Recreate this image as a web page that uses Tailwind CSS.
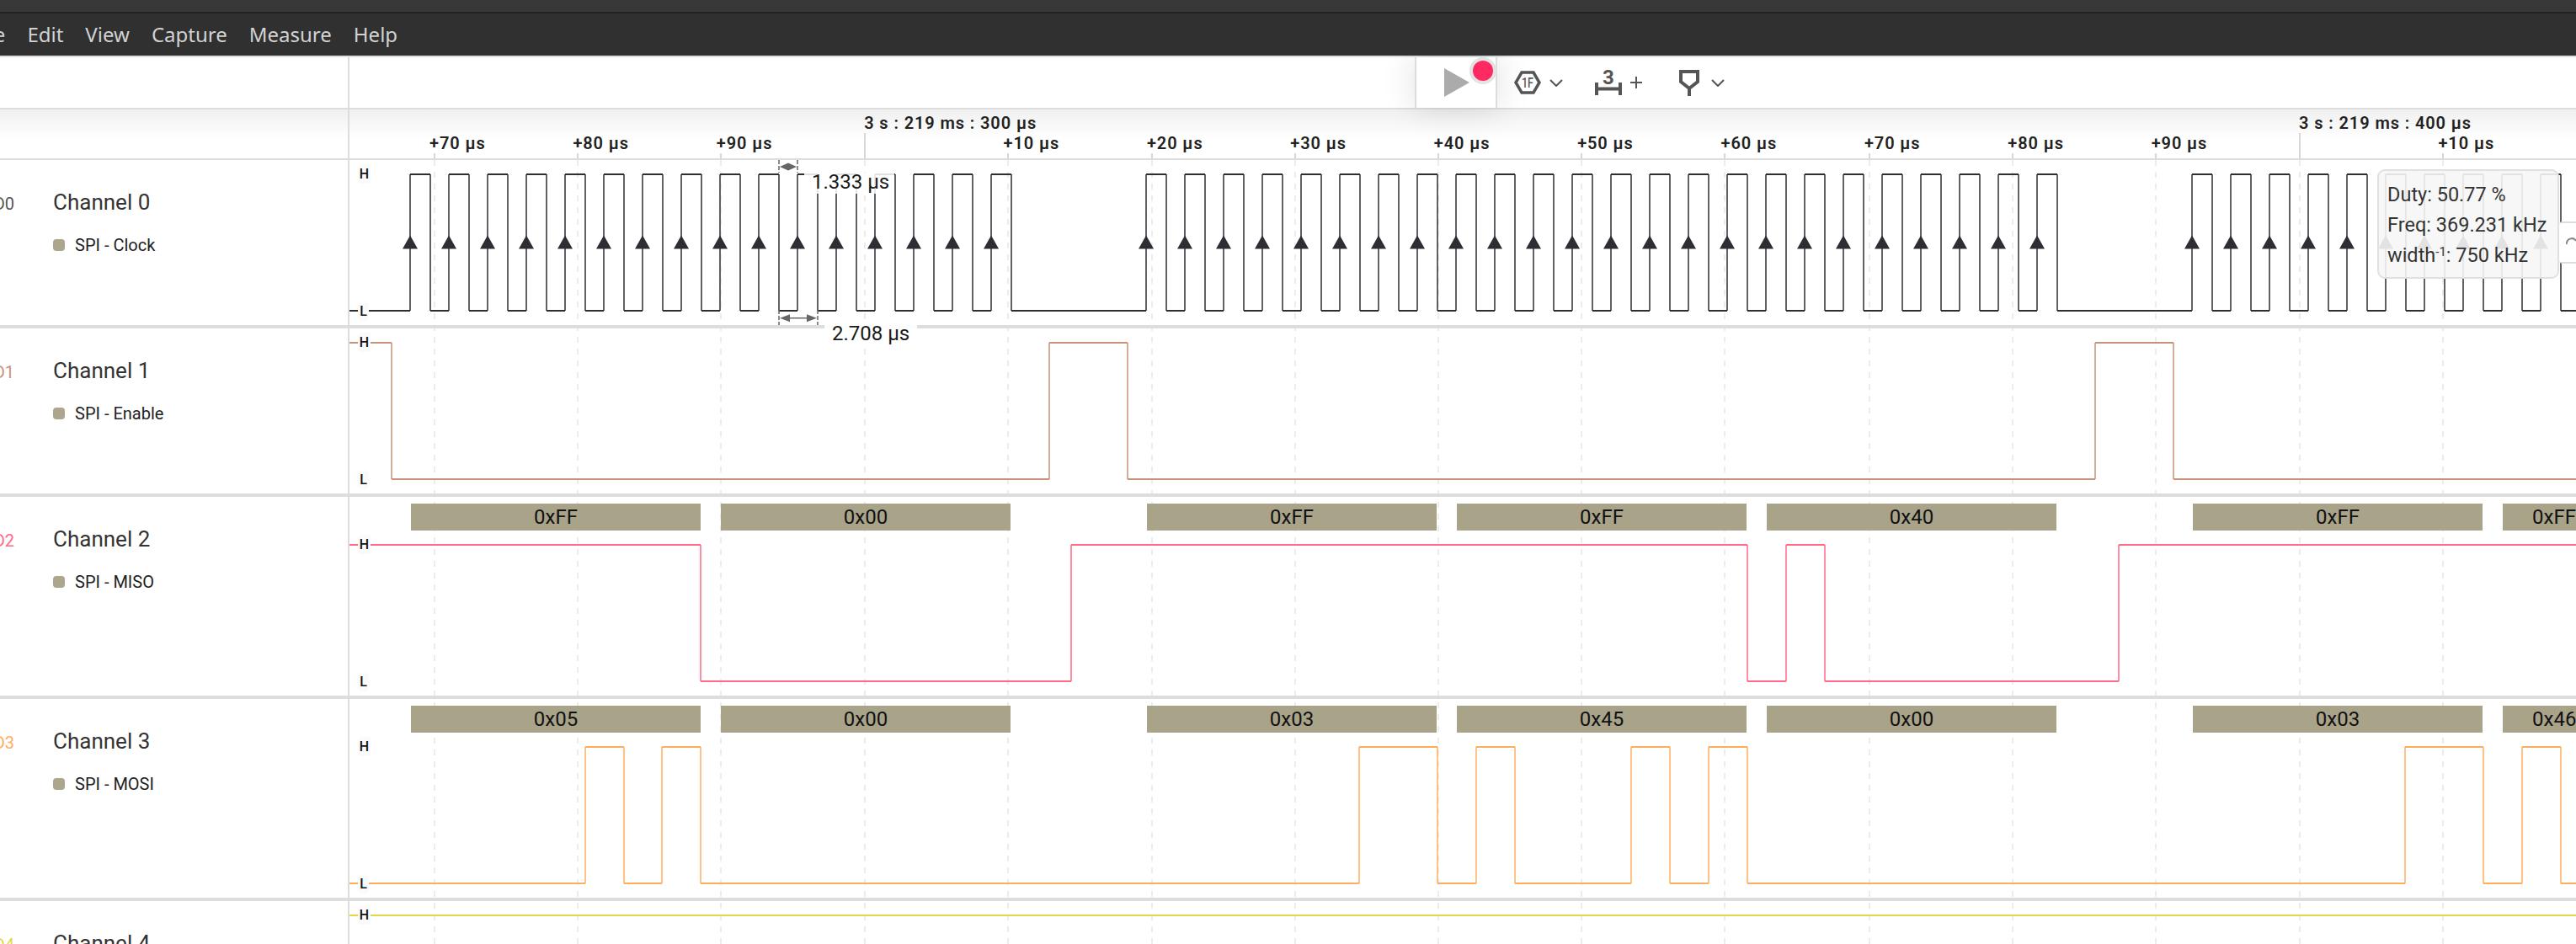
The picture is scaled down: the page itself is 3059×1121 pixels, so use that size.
<!DOCTYPE html>
<html lang="en">
<head>
<meta charset="utf-8">
<title>Logic analyzer</title>
<script src="https://cdn.jsdelivr.net/npm/@tailwindcss/browser@4"></script>
</head>
<body class="bg-white">
<div class="relative flex h-[1121px] w-[3059px] flex-col overflow-hidden bg-white font-['Roboto',sans-serif] text-[#222]">

  <!-- title strip and menu -->
  <div class="relative z-20 h-[14px] bg-[#383838]"></div>
  <div class="relative z-20 h-[2px] bg-[#222]"></div>
  <div class="relative z-20 flex h-[50px] items-center gap-[26px] bg-[#303030] font-['Noto_Sans',sans-serif] text-[24px] text-[#d2d2d2]">
    <span class="-ml-[32px]">File</span><span>Edit</span><span>View</span><span>Capture</span><span>Measure</span><span>Help</span>
  </div>

  <!-- toolbar -->
  <div class="flex h-[64px] shrink-0 border-y-2 border-[#ddd]">
    <div class="h-full w-[415px] shrink-0 border-r-2 border-[#ddd]"></div>
    <div class="relative z-10 ml-[1265px] h-full w-[98px] shrink-0 border-x-2 border-[#ddd] bg-white shadow-[0_0_40px_rgba(0,0,0,0.13)]">
      <svg class="absolute -left-[2px] top-0" width="98" height="60" viewBox="0 0 98 60">
        <path d="M35 13V47L65 30Z" fill="#ababab"/>
        <circle cx="81" cy="16" r="16" fill="#e3e3e3"/>
        <circle cx="81" cy="16" r="12" fill="#ff2a62"/>
      </svg>
    </div>
    <div class="relative z-10 flex items-center">
      <svg class="ml-[20px]" width="32" height="28" viewBox="0 0 32 28">
        <path d="M9 2H23L30 14L23 26H9L2 14Z" fill="none" stroke="#555" stroke-width="3.5"/>
        <text x="16" y="20" font-size="17" font-family="Roboto" font-weight="500" fill="#555" text-anchor="middle" textLength="14" lengthAdjust="spacingAndGlyphs">1F</text>
      </svg>
      <svg class="ml-[10px]" width="16" height="9" viewBox="0 0 16 9"><path d="M1 1L8 8L15 1" fill="none" stroke="#555" stroke-width="2"/></svg>
      <svg class="ml-[38px]" width="32" height="32" viewBox="0 0 32 32">
        <text x="16" y="18" font-size="24" font-family="Roboto" font-weight="700" fill="#555" text-anchor="middle">3</text>
        <path d="M2 16V31M30 16V31" stroke="#555" stroke-width="4" fill="none"/>
        <path d="M2 23.5H30" stroke="#555" stroke-width="4" fill="none"/>
      </svg>
      <svg class="ml-[10px]" width="14" height="14" viewBox="0 0 14 14"><path d="M7 0V14M0 7H14" stroke="#555" stroke-width="2" fill="none"/></svg>
      <svg class="ml-[44px]" width="24" height="32" viewBox="0 0 24 32">
        <path d="M2 3H22V15L12 23L2 15Z" fill="none" stroke="#555" stroke-width="4"/>
        <path d="M12 22V32" stroke="#555" stroke-width="4" fill="none"/>
      </svg>
      <svg class="ml-[14px]" width="16" height="9" viewBox="0 0 16 9"><path d="M1 1L8 8L15 1" fill="none" stroke="#555" stroke-width="2"/></svg>
    </div>
  </div>

  <!-- ruler -->
  <div class="relative flex h-[60px] shrink-0 border-b-2 border-[#ddd] bg-linear-to-b from-[#f0f0f0] to-white to-60%">
    <div class="h-full w-[415px] shrink-0 border-r-2 border-[#ddd]"></div>
    <div class="ml-[95px] flex items-start whitespace-nowrap text-[20px] leading-[24px] font-semibold tracking-[0.9px] text-[#222]">
      <div class="mt-[28px] w-[170.4px] shrink-0">+70 µs</div>
      <div class="mt-[28px] w-[170.4px] shrink-0">+80 µs</div>
      <div class="mt-[28px] w-[170.4px] shrink-0">+90 µs</div>
      <div class="mt-[4px] w-[170.4px] shrink-0 pl-[5px]">3 s : 219 ms : 300 µs</div>
      <div class="mt-[28px] w-[170.4px] shrink-0">+10 µs</div>
      <div class="mt-[28px] w-[170.4px] shrink-0">+20 µs</div>
      <div class="mt-[28px] w-[170.4px] shrink-0">+30 µs</div>
      <div class="mt-[28px] w-[170.4px] shrink-0">+40 µs</div>
      <div class="mt-[28px] w-[170.4px] shrink-0">+50 µs</div>
      <div class="mt-[28px] w-[170.4px] shrink-0">+60 µs</div>
      <div class="mt-[28px] w-[170.4px] shrink-0">+70 µs</div>
      <div class="mt-[28px] w-[170.4px] shrink-0">+80 µs</div>
      <div class="mt-[28px] w-[170.4px] shrink-0">+90 µs</div>
      <div class="mt-[4px] w-[170.4px] shrink-0 pl-[5px]">3 s : 219 ms : 400 µs</div>
      <div class="mt-[28px] w-[170.4px] shrink-0">+10 µs</div>
    </div>
    <svg class="absolute left-0 top-0" width="3059" height="60" viewBox="0 0 3059 60" fill="none" stroke="#d8d8d8" stroke-width="2">
      <path d="M516 52V58M686 52V58M856 52V58M1197 52V58M1368 52V58M1538 52V58M1708 52V58M1878 52V58M2048 52V58M2220 52V58M2390 52V58M2560 52V58M2901 52V58"/>
      <path d="M1027 28V58M2731 28V58"/>
    </svg>
  </div>

  <!-- channels -->
  <div class="relative flex min-h-0 flex-1 flex-col">
    <svg class="absolute left-0 top-0" width="3059" height="931" viewBox="0 0 3059 931" fill="none" stroke="#ececec" stroke-width="2" stroke-dasharray="7 7">
      <path d="M516 0V931M686 0V931M856 0V931M1027 0V931M1197 0V931M1368 0V931M1538 0V931M1708 0V931M1878 0V931M2048 0V931M2220 0V931M2390 0V931M2560 0V931M2731 0V931M2901 0V931"/>
    </svg>

    <!-- row 0 -->
    <div class="relative z-10 flex h-[200px] shrink-0 border-b-4 border-[#ddd]">
      <div class="h-full w-[415px] shrink-0 border-r-2 border-[#ddd]">
        <div class="flex items-baseline pt-[34px]">
          <span class="flex w-[17px] justify-end whitespace-nowrap text-[20px] leading-[32px] text-[#555]">D0</span>
          <span class="ml-[46px] text-[26px] leading-[32px] text-[#333]">Channel 0</span>
        </div>
        <div class="ml-[63px] mt-[21px] flex items-center gap-[12px] text-[20px] leading-[24px] text-[#222]">
          <span class="h-[14px] w-[14px] rounded-[4px] bg-[#aca68d]"></span><span>SPI - Clock</span>
        </div>
      </div>
      <svg class="absolute left-0 top-0 overflow-visible" width="3059" height="196" viewBox="0 0 3059 196" fill="none">
        <defs>
          <g id="pulse">
            <path stroke="#2d2d33" stroke-width="1.5" d="M0 17V179M24 17V179"/>
            <path stroke="#2d2d33" stroke-width="2" d="M0 17H24M24 179H46"/>
            <path fill="#2d2d33" d="M0 89.5l9 16h-18z"/>
          </g>
          <g id="byte">
            <use href="#pulse" x="0"/>
            <use href="#pulse" x="46"/>
            <use href="#pulse" x="92"/>
            <use href="#pulse" x="138"/>
            <use href="#pulse" x="184"/>
            <use href="#pulse" x="230"/>
            <use href="#pulse" x="276"/>
            <use href="#pulse" x="322"/>
          </g>
        </defs>
        <path stroke="#2d2d33" stroke-width="2" d="M415 179H487M1201 179H1361M2443 179H2603"/>
        <use href="#byte" x="487"/>
        <use href="#byte" x="855"/>
        <use href="#byte" x="1361"/>
        <use href="#byte" x="1729"/>
        <use href="#byte" x="2097"/>
        <use href="#byte" x="2603"/>
        <use href="#byte" x="2971"/>
        <path stroke="#666" stroke-width="1.5" stroke-dasharray="5 2" d="M925 0V15M947 0V15M925 178V196M971 178V196"/>
        <path fill="#666" d="M926 8L936 3.5L946 8L936 12.5ZM926 187.7l12-4.5v9zM970 187.7l-12-4.5v9z"/>
        <path stroke="#666" stroke-width="1.5" d="M938 187.7H958"/>
      </svg>
      <div class="absolute left-[425px] top-[5px] flex h-[23px] w-[15px] items-center justify-center rounded-[4px] bg-[#fafafa] text-[16px] font-medium text-[#111]">H</div>
      <div class="absolute left-[425px] top-[169px] flex h-[22px] w-[13px] items-center justify-center rounded-[4px] bg-[#fafafa] text-[16px] font-medium text-[#111]">L</div>
      <div class="absolute left-[955px] top-[15px] h-[25px] w-[107px] whitespace-nowrap bg-white/85 pl-[9px] text-[24px] leading-[22px] text-[#1a1a1a]">1.333 µs</div>
      <div class="absolute left-[979px] top-[196px] h-[25px] w-[110px] whitespace-nowrap bg-white/90 pl-[9px] text-[24px] leading-[20px] text-[#1a1a1a]">2.708 µs</div>
      <div class="absolute left-[2823px] top-[11px] h-[130px] w-[216px] rounded-[9px] border-2 border-[#e0e0e0] bg-[#f6f6f6]/90 pl-[10px] pt-[10px] text-[23.5px] leading-[36px] text-[#333]">
        <div>Duty: 50.77 %</div>
        <div>Freq: 369.231 kHz</div>
        <div>width<sup class="text-[15px]">-1</sup>: 750 kHz</div>
      </div>
      <div class="absolute left-[3039px] top-[73px] flex h-[50px] w-[20px] items-center rounded-l-[4px] border-y-2 border-[#ddd] bg-white pl-[8px]">
        <svg width="12" height="12" viewBox="0 0 12 12"><path d="M1 8A6 6 0 0 1 12 4" fill="none" stroke="#888" stroke-width="2"/></svg>
      </div>
    </div>

    <!-- row 1 -->
    <div class="relative flex h-[200px] shrink-0 border-b-4 border-[#ddd]">
      <div class="h-full w-[415px] shrink-0 border-r-2 border-[#ddd]">
        <div class="flex items-baseline pt-[34px]">
          <span class="flex w-[17px] justify-end whitespace-nowrap text-[20px] leading-[32px] text-[#c8917a]">D1</span>
          <span class="ml-[46px] text-[26px] leading-[32px] text-[#333]">Channel 1</span>
        </div>
        <div class="ml-[63px] mt-[21px] flex items-center gap-[12px] text-[20px] leading-[24px] text-[#222]">
          <span class="h-[14px] w-[14px] rounded-[4px] bg-[#aca68d]"></span><span>SPI - Enable</span>
        </div>
      </div>
      <svg class="absolute left-0 top-0" width="3059" height="196" viewBox="0 0 3059 196" fill="none" stroke="#c8917a">
        <path stroke-width="1.5" d="M465 17V179M1246 17V179M1339 17V179M2488 17V179M2581 17V179"/>
        <path stroke-width="2" d="M415 17H465M465 179H1246M1246 17H1339M1339 179H2488M2488 17H2581M2581 179H3059"/>
      </svg>
      <div class="absolute left-[425px] top-[5px] flex h-[23px] w-[15px] items-center justify-center rounded-[4px] bg-[#fafafa] text-[16px] font-medium text-[#111]">H</div>
      <div class="absolute left-[425px] top-[169px] flex h-[22px] w-[13px] items-center justify-center rounded-[4px] bg-[#fafafa] text-[16px] font-medium text-[#111]">L</div>
    </div>

    <!-- row 2 -->
    <div class="relative flex h-[240px] shrink-0 border-b-4 border-[#ddd]">
      <div class="h-full w-[415px] shrink-0 border-r-2 border-[#ddd]">
        <div class="flex items-baseline pt-[34px]">
          <span class="flex w-[17px] justify-end whitespace-nowrap text-[20px] leading-[32px] text-[#ff6a85]">D2</span>
          <span class="ml-[46px] text-[26px] leading-[32px] text-[#333]">Channel 2</span>
        </div>
        <div class="ml-[63px] mt-[21px] flex items-center gap-[12px] text-[20px] leading-[24px] text-[#222]">
          <span class="h-[14px] w-[14px] rounded-[4px] bg-[#aca68d]"></span><span>SPI - MISO</span>
        </div>
      </div>
      <svg class="absolute left-0 top-0" width="3059" height="236" viewBox="0 0 3059 236" fill="none" stroke="#ff6a85">
        <path stroke-width="1.5" d="M832 57V219M1272 57V219M2075 57V219M2121 57V219M2167 57V219M2516 57V219"/>
        <path stroke-width="2" d="M415 57H832M832 219H1272M1272 57H2075M2075 219H2121M2121 57H2167M2167 219H2516M2516 57H3059"/>
      </svg>
      <div class="absolute left-[488px] top-[8px] flex text-[24px] leading-[32px] text-[#111]">
        <div class="h-[32px] w-[344px] bg-[#a9a38a] text-center">0xFF</div>
        <div class="ml-[24px] h-[32px] w-[344px] bg-[#a9a38a] text-center">0x00</div>
        <div class="ml-[162px] h-[32px] w-[344px] bg-[#a9a38a] text-center">0xFF</div>
        <div class="ml-[24px] h-[32px] w-[344px] bg-[#a9a38a] text-center">0xFF</div>
        <div class="ml-[24px] h-[32px] w-[344px] bg-[#a9a38a] text-center">0x40</div>
        <div class="ml-[162px] h-[32px] w-[344px] bg-[#a9a38a] text-center">0xFF</div>
        <div class="ml-[24px] h-[32px] w-[87px] overflow-hidden whitespace-nowrap bg-[#a9a38a] pl-[35px]">0xFF</div>
      </div>
      <div class="absolute left-[425px] top-[45px] flex h-[23px] w-[15px] items-center justify-center rounded-[4px] bg-[#fafafa] text-[16px] font-medium text-[#111]">H</div>
      <div class="absolute left-[425px] top-[209px] flex h-[22px] w-[13px] items-center justify-center rounded-[4px] bg-[#fafafa] text-[16px] font-medium text-[#111]">L</div>
    </div>

    <!-- row 3 -->
    <div class="relative flex h-[240px] shrink-0 border-b-4 border-[#ddd]">
      <div class="h-full w-[415px] shrink-0 border-r-2 border-[#ddd]">
        <div class="flex items-baseline pt-[34px]">
          <span class="flex w-[17px] justify-end whitespace-nowrap text-[20px] leading-[32px] text-[#ffad5c]">D3</span>
          <span class="ml-[46px] text-[26px] leading-[32px] text-[#333]">Channel 3</span>
        </div>
        <div class="ml-[63px] mt-[21px] flex items-center gap-[12px] text-[20px] leading-[24px] text-[#222]">
          <span class="h-[14px] w-[14px] rounded-[4px] bg-[#aca68d]"></span><span>SPI - MOSI</span>
        </div>
      </div>
      <svg class="absolute left-0 top-0" width="3059" height="236" viewBox="0 0 3059 236" fill="none" stroke="#ffad5c">
        <path stroke-width="1.5" d="M695 57V219M741 57V219M786 57V219M832 57V219M1614 57V219M1707 57V219M1753 57V219M1799 57V219M1937 57V219M1983 57V219M2029 57V219M2075 57V219M2856 57V219M2949 57V219M2995 57V219M3041 57V219"/>
        <path stroke-width="2" d="M415 219H695M695 57H741M741 219H786M786 57H832M832 219H1614M1614 57H1707M1707 219H1753M1753 57H1799M1799 219H1937M1937 57H1983M1983 219H2029M2029 57H2075M2075 219H2856M2856 57H2949M2949 219H2995M2995 57H3041M3041 219H3059"/>
      </svg>
      <div class="absolute left-[488px] top-[8px] flex text-[24px] leading-[32px] text-[#111]">
        <div class="h-[32px] w-[344px] bg-[#a9a38a] text-center">0x05</div>
        <div class="ml-[24px] h-[32px] w-[344px] bg-[#a9a38a] text-center">0x00</div>
        <div class="ml-[162px] h-[32px] w-[344px] bg-[#a9a38a] text-center">0x03</div>
        <div class="ml-[24px] h-[32px] w-[344px] bg-[#a9a38a] text-center">0x45</div>
        <div class="ml-[24px] h-[32px] w-[344px] bg-[#a9a38a] text-center">0x00</div>
        <div class="ml-[162px] h-[32px] w-[344px] bg-[#a9a38a] text-center">0x03</div>
        <div class="ml-[24px] h-[32px] w-[87px] overflow-hidden whitespace-nowrap bg-[#a9a38a] pl-[35px]">0x46</div>
      </div>
      <div class="absolute left-[425px] top-[45px] flex h-[23px] w-[15px] items-center justify-center rounded-[4px] bg-[#fafafa] text-[16px] font-medium text-[#111]">H</div>
      <div class="absolute left-[425px] top-[209px] flex h-[22px] w-[13px] items-center justify-center rounded-[4px] bg-[#fafafa] text-[16px] font-medium text-[#111]">L</div>
    </div>

    <!-- row 4 -->
    <div class="relative flex h-[200px] shrink-0">
      <div class="h-full w-[415px] shrink-0 border-r-2 border-[#ddd]">
        <div class="flex items-baseline pt-[34px]">
          <span class="flex w-[17px] justify-end whitespace-nowrap text-[20px] leading-[32px] text-[#e6d64a]">D4</span>
          <span class="ml-[46px] text-[26px] leading-[32px] text-[#333]">Channel 4</span>
        </div>
      </div>
      <svg class="absolute left-0 top-0" width="3059" height="196" viewBox="0 0 3059 196" fill="none" stroke="#e6d64a">
        <path stroke-width="2" d="M415 17H3059"/>
      </svg>
      <div class="absolute left-[425px] top-[5px] flex h-[23px] w-[15px] items-center justify-center rounded-[4px] bg-[#fafafa] text-[16px] font-medium text-[#111]">H</div>
    </div>
  </div>
</div>
</body>
</html>
